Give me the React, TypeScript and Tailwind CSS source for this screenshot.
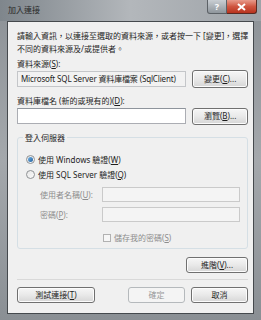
import React from 'react';

const U = ({ c }: { c: string }) => <span className="underline">{c}</span>;

function Btn({ children, className = '', disabled = false }: { children: React.ReactNode; className?: string; disabled?: boolean }) {
  return (
    <div
      className={`flex items-center justify-center rounded-[3px] border leading-none ${
        disabled
          ? 'border-[#b5b9bc] bg-[#f4f4f4] text-[#9a9a9a]'
          : 'border-[#707070] bg-gradient-to-b from-[#f6f6f6] via-[#e9e9e9] to-[#d6d6d6] text-[#1e1e1e] shadow-[inset_0_0_0_1px_#fcfcfc]'
      } ${className}`}
    >
      {children}
    </div>
  );
}

function Radio({ checked }: { checked?: boolean }) {
  return (
    <div className="flex size-[9px] items-center justify-center rounded-full border border-[#8f9294] bg-gradient-to-br from-[#e6e6e6] to-[#fbfbfb]">
      {checked && <div className="size-[5px] rounded-full bg-gradient-to-br from-[#73b4e6] to-[#1f5f9c]" />}
    </div>
  );
}

export default function App() {
  return (
    <div className="flex h-[320px] w-[261px] flex-col overflow-hidden bg-gradient-to-b from-[#8c9196] via-[#a4a8ac] to-[#8a8f94] font-['Noto_Sans','Noto_Sans_CJK_TC',sans-serif] text-[8px] text-[#1e1e1e]">
      {/* title bar */}
      <div className="flex h-[21px] shrink-0 items-start justify-between bg-gradient-to-r from-[#7f868c] via-[#b3b7bb] to-[#9ea3a8] pl-[8px] pr-[4px]">
        <div className="mt-[5px] leading-[10px] text-[#2a2a2a]">加入連接</div>
        <div className="flex">
          <div className="flex h-[14px] w-[20px] items-center justify-center rounded-bl-[3px] border border-t-0 border-[#5c6166] bg-gradient-to-b from-[#c9ced3] to-[#8f969c] text-[9px] font-bold leading-none text-white">
            ?
          </div>
          <div className="flex h-[14px] w-[30px] items-center justify-center rounded-br-[3px] border border-l-0 border-t-0 border-[#5a2a22] bg-gradient-to-b from-[#e79a8b] via-[#cf5540] to-[#b8321d]">
            <svg width="9" height="8" viewBox="0 0 9 8">
              <path d="M1 1 L8 7 M8 1 L1 7" stroke="white" strokeWidth="2" />
            </svg>
          </div>
        </div>
      </div>

      {/* dialog body */}
      <div className="mx-[7px] mb-[6px] flex flex-1 flex-col border border-[#45494d] bg-[#f0f0f0] pb-[10px] pl-[9px] pr-[5px] pt-[7px]">
        <div className="whitespace-nowrap leading-[13px]">
          請輸入資訊，以連接至選取的資料來源，或者按一下 [變更]，選擇
          <br />
          不同的資料來源及/或提供者。
        </div>

        <div className="mt-[2px] leading-[13px]">
          資料來源(<U c="S" />):
        </div>
        <div className="flex h-[18px] items-center gap-[6px]">
          <div className="flex h-[16px] w-[170px] items-center overflow-hidden whitespace-nowrap border border-[#c4c6c9] bg-[#f2f2f2] pl-[3px] leading-none tracking-[-0.15px]">
            Microsoft SQL Server 資料庫檔案 (SqlClient)
          </div>
          <Btn className="h-[18px] w-[56px]">
            變更(<U c="C" />)...
          </Btn>
        </div>

        <div className="mt-[6px] leading-[13px]">
          資料庫檔名 (新的或現有的)(<U c="D" />):
        </div>
        <div className="flex h-[18px] items-center gap-[6px]">
          <div className="h-[16px] w-[170px] border border-[#abadb3] border-t-[#8e949c] bg-white" />
          <Btn className="h-[17px] w-[56px]">
            瀏覽(<U c="B" />)...
          </Btn>
        </div>

        {/* group box */}
        <div className="relative mt-[12px] flex h-[112px] flex-col rounded-[3px] border border-[#d5dfe5] pb-[4px] pl-[8px] pr-[7px] pt-[15px]">
          <div className="absolute -top-[7px] left-[5px] bg-[#f0f0f0] px-[2px] leading-[13px]">登入伺服器</div>

          <div className="flex h-[13px] items-center gap-[3px]">
            <Radio checked />
            <span>
              使用 Windows 驗證(<U c="W" />)
            </span>
          </div>
          <div className="mt-[2px] flex h-[13px] items-center gap-[3px]">
            <Radio />
            <span>
              使用 SQL Server 驗證(<U c="Q" />)
            </span>
          </div>

          <div className="mt-[6px] flex h-[15px] items-center pl-[14px]">
            <div className="w-[62px] text-[#8d8d8d]">
              使用者名稱(<U c="U" />):
            </div>
            <div className="h-[15px] flex-1 border border-[#cacaca] bg-[#f4f4f4]" />
          </div>
          <div className="mt-[5px] flex h-[15px] items-center pl-[14px]">
            <div className="w-[62px] text-[#8d8d8d]">
              密碼(<U c="P" />):
            </div>
            <div className="h-[15px] flex-1 border border-[#cacaca] bg-[#f4f4f4]" />
          </div>
          <div className="mt-[9px] flex h-[13px] items-center gap-[3px] pl-[77px] text-[#8d8d8d]">
            <div className="size-[8px] border border-[#b1b1b1] bg-[#f6f6f6]" />
            <span>
              儲存我的密碼(<U c="S" />)
            </span>
          </div>
        </div>

        <div className="mt-[8px] flex justify-end">
          <Btn className="h-[16px] w-[62px]">
            進階(<U c="V" />)...
          </Btn>
        </div>

        <div className="mt-[6px] h-px bg-[#d9d9d9]" />

        <div className="mt-[7px] flex">
          <Btn className="h-[16px] w-[78px]">
            測試連接(<U c="T" />)
          </Btn>
          <div className="flex-1" />
          <Btn disabled className="h-[16px] w-[57px]">
            確定
          </Btn>
          <Btn className="ml-[6px] h-[16px] w-[57px]">取消</Btn>
        </div>
      </div>
    </div>
  );
}
